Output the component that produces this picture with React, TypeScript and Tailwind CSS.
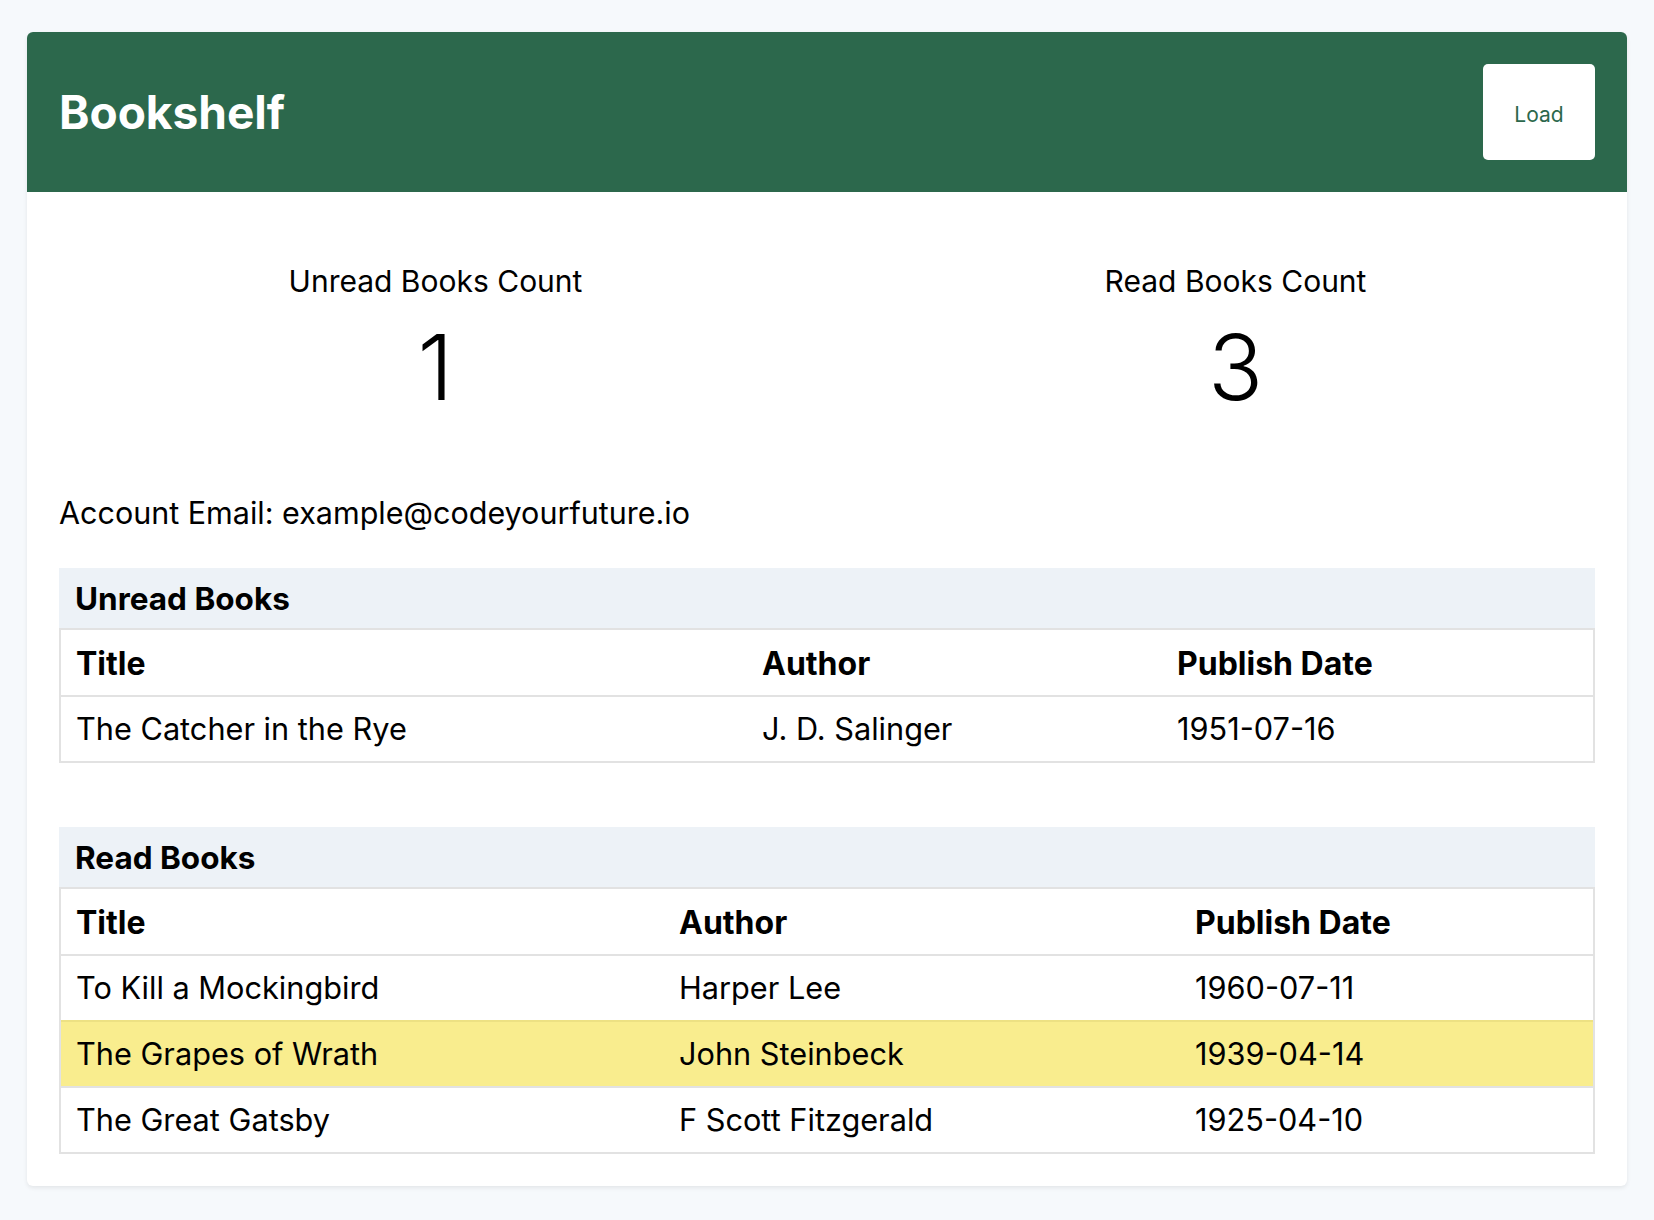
type Book = { title: string; author: string; date: string };

const unreadBooks: Book[] = [
  { title: "The Catcher in the Rye", author: "J. D. Salinger", date: "1951-07-16" },
];

const readBooks: Book[] = [
  { title: "To Kill a Mockingbird", author: "Harper Lee", date: "1960-07-11" },
  { title: "The Grapes of Wrath", author: "John Steinbeck", date: "1939-04-14" },
  { title: "The Great Gatsby", author: "F Scott Fitzgerald", date: "1925-04-10" },
];

const font = { fontFamily: "Inter, 'Noto Sans', sans-serif" };

function BookTable({
  caption,
  books,
  cols,
  highlight,
}: {
  caption: string;
  books: Book[];
  cols: string; // grid template for the three columns
  highlight?: number;
}) {
  return (
    <div>
      <div className="h-[60px] bg-[#edf2f7] flex items-center pl-[16px] pt-[2px] text-[31.5px] font-bold">{caption}</div>
      <div className="border-2 border-[#e2e2e2]">
        <div className={`grid ${cols} h-[65px] items-center font-bold text-[32px] pt-[2px]`}>
          <div className="pl-[15px]">Title</div>
          <div className="pl-[15px]">Author</div>
          <div className="pl-[15px]">Publish Date</div>
        </div>
        {books.map((b, i) => (
          <div
            key={b.title}
            className={
              i === highlight
                ? `grid ${cols} h-[66px] items-center text-[30.7px] border-t-2 border-[#ede183] bg-[#f9ed8e]`
                : `grid ${cols} h-[66px] items-center text-[30.7px] border-t-2 border-[#e2e2e2]`
            }
          >
            <div className="pl-[15px]">{b.title}</div>
            <div className="pl-[15px]">{b.author}</div>
            <div className="pl-[15px]">{b.date}</div>
          </div>
        ))}
      </div>
    </div>
  );
}

export default function App() {
  return (
    <div className="min-h-screen bg-[#f6f9fc] pt-[32px] pb-[34px] text-black" style={font}>
      <div className="w-[1600px] mx-auto bg-white rounded-md shadow-[0_2px_4px_rgba(0,0,0,0.08)] overflow-hidden">
        <header className="bg-[#2c684c] p-8 flex items-center justify-between">
          <h1 className="text-white font-bold text-[46px] leading-none">Bookshelf</h1>
          <button className="bg-white rounded-[5px] w-[112px] h-[96px] pt-[6px] text-[#2c684c] text-[21px]">Load</button>
        </header>

        <div className="grid grid-cols-2 pt-[71px]">
          <div className="pl-[17px] text-center">
            <div className="text-[30px] leading-[36px]">Unread Books Count</div>
            <div className="text-[91px] font-light leading-none mt-[23px]">{unreadBooks.length}</div>
          </div>
          <div className="pl-[17px] text-center">
            <div className="text-[30px] leading-[36px]">Read Books Count</div>
            <div className="text-[91px] font-light leading-none mt-[23px]">{readBooks.length}</div>
          </div>
        </div>

        <div className="px-8 pb-8">
          <p className="text-[30.5px] leading-[48px] mt-[76px]">Account Email: example@codeyourfuture.io</p>
          <div className="mt-[31px]">
            <BookTable caption="Unread Books" books={unreadBooks} cols="grid-cols-[686px_415px_431px]" />
          </div>
          <div className="mt-[64px]">
            <BookTable caption="Read Books" books={readBooks} cols="grid-cols-[603px_516px_413px]" highlight={1} />
          </div>
        </div>
      </div>
    </div>
  );
}
